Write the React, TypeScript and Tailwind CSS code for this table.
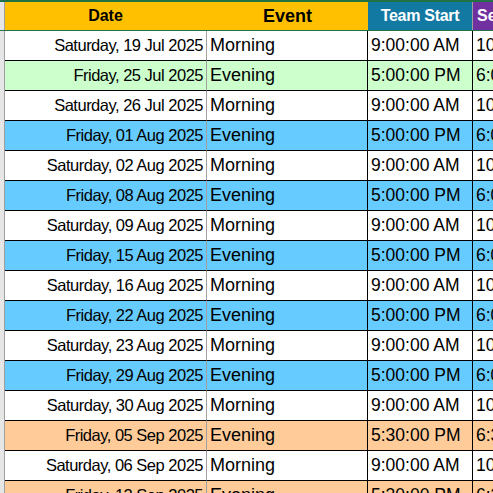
import * as React from 'react';

type Row = {
  date: string;
  event: string;
  start: string;
  end: string;
  bg: string;
};

const WHITE = 'bg-white';
const GREEN = 'bg-[#ccffcc]';
const BLUE = 'bg-[#66ccff]';
const PEACH = 'bg-[#ffcc99]';

const rows: Row[] = [
  { date: 'Saturday, 19 Jul 2025', event: 'Morning', start: '9:00:00 AM', end: '10:00:00 AM', bg: WHITE },
  { date: 'Friday, 25 Jul 2025', event: 'Evening', start: '5:00:00 PM', end: '6:00:00 PM', bg: GREEN },
  { date: 'Saturday, 26 Jul 2025', event: 'Morning', start: '9:00:00 AM', end: '10:00:00 AM', bg: WHITE },
  { date: 'Friday, 01 Aug 2025', event: 'Evening', start: '5:00:00 PM', end: '6:00:00 PM', bg: BLUE },
  { date: 'Saturday, 02 Aug 2025', event: 'Morning', start: '9:00:00 AM', end: '10:00:00 AM', bg: WHITE },
  { date: 'Friday, 08 Aug 2025', event: 'Evening', start: '5:00:00 PM', end: '6:00:00 PM', bg: BLUE },
  { date: 'Saturday, 09 Aug 2025', event: 'Morning', start: '9:00:00 AM', end: '10:00:00 AM', bg: WHITE },
  { date: 'Friday, 15 Aug 2025', event: 'Evening', start: '5:00:00 PM', end: '6:00:00 PM', bg: BLUE },
  { date: 'Saturday, 16 Aug 2025', event: 'Morning', start: '9:00:00 AM', end: '10:00:00 AM', bg: WHITE },
  { date: 'Friday, 22 Aug 2025', event: 'Evening', start: '5:00:00 PM', end: '6:00:00 PM', bg: BLUE },
  { date: 'Saturday, 23 Aug 2025', event: 'Morning', start: '9:00:00 AM', end: '10:00:00 AM', bg: WHITE },
  { date: 'Friday, 29 Aug 2025', event: 'Evening', start: '5:00:00 PM', end: '6:00:00 PM', bg: BLUE },
  { date: 'Saturday, 30 Aug 2025', event: 'Morning', start: '9:00:00 AM', end: '10:00:00 AM', bg: WHITE },
  { date: 'Friday, 05 Sep 2025', event: 'Evening', start: '5:30:00 PM', end: '6:30:00 PM', bg: PEACH },
  { date: 'Saturday, 06 Sep 2025', event: 'Morning', start: '9:00:00 AM', end: '10:00:00 AM', bg: WHITE },
  { date: 'Friday, 12 Sep 2025', event: 'Evening', start: '5:30:00 PM', end: '6:30:00 PM', bg: PEACH },
];

const font = "font-['Liberation_Sans',Arial,sans-serif]";

export default function App(): React.JSX.Element {
  return (
    <div className={`w-[493px] h-[493px] overflow-hidden bg-white ${font}`}>
      {/* Header row */}
      <div className="flex h-[31px] border-t-2 border-b border-[#217346]">
        <div className="w-[5px] shrink-0 bg-[#e6e6e6] border-r border-[#9e9e9e]" />
        <div className="w-[202px] shrink-0 bg-[#ffc000] border-r border-[#ffc000] flex items-center justify-center text-[16px] font-bold text-black">
          Date
        </div>
        <div className="w-[161px] shrink-0 bg-[#ffc000] flex items-center justify-center text-[18px] font-bold text-black">
          Event
        </div>
        <div className="w-[105px] shrink-0 bg-[#1279a2] border-r border-[#a0a0a0] flex items-center justify-center text-[16px] tracking-[-0.3px] font-bold text-white">
          Team Start
        </div>
        <div className="flex-1 bg-[#7030a0] flex items-center pl-[4px] text-[16px] font-bold text-white whitespace-nowrap overflow-hidden">
          Session End
        </div>
      </div>

      {/* Body rows */}
      {rows.map((r, i) => (
        <div key={i} className="flex h-[30px] text-black">
          <div className="w-[5px] shrink-0 bg-[#e6e6e6] border-r border-[#9e9e9e]" />
          <div className={`w-[202px] shrink-0 ${r.bg} border-r border-b border-r-[#a0a0a0] border-b-black flex items-center justify-end pr-[3px] text-[16.5px] tracking-[-0.5px] whitespace-nowrap`}>
            {r.date}
          </div>
          <div className={`w-[161px] shrink-0 ${r.bg} border-r border-b border-black flex items-center pl-[3px] text-[18px]`}>
            {r.event}
          </div>
          <div className={`w-[105px] shrink-0 ${r.bg} border-r border-b border-black flex items-center pl-[3px] text-[17.5px] whitespace-nowrap`}>
            {r.start}
          </div>
          <div className={`flex-1 ${r.bg} border-b border-black flex items-center pl-[3px] text-[17.5px] whitespace-nowrap overflow-hidden`}>
            {r.end}
          </div>
        </div>
      ))}
    </div>
  );
}
